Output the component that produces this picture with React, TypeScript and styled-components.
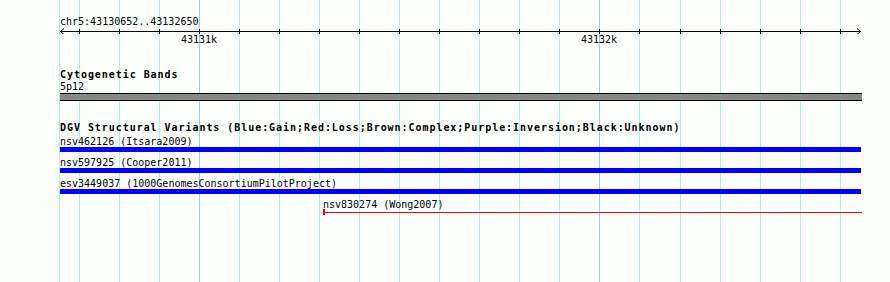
import React from "react";
import styled, { createGlobalStyle } from "styled-components";

const PAGE_W = 890;
const PAGE_H = 282;
const TRACK_LEFT = 60;
const TRACK_RIGHT = 861;
const TRACK_W = TRACK_RIGHT - TRACK_LEFT;

// guide-line x positions (every 100 bp); major ones carry a label
const GUIDES: { x: number; label?: string }[] = [
  { x: 79 }, { x: 119 }, { x: 159 }, { x: 199, label: "43131k" }, { x: 239 },
  { x: 279 }, { x: 319 }, { x: 359 }, { x: 399 }, { x: 439 }, { x: 479 },
  { x: 519 }, { x: 559 }, { x: 599, label: "43132k" }, { x: 639 }, { x: 680 },
  { x: 720 }, { x: 760 }, { x: 800 }, { x: 840 },
];

type Variant = { id: string; source: string; start: number; end: number; kind: "gain" | "loss" };

const VARIANTS: Variant[] = [
  { id: "nsv462126", source: "Itsara2009", start: TRACK_LEFT, end: TRACK_RIGHT, kind: "gain" },
  { id: "nsv597925", source: "Cooper2011", start: TRACK_LEFT, end: TRACK_RIGHT, kind: "gain" },
  { id: "esv3449037", source: "1000GenomesConsortiumPilotProject", start: TRACK_LEFT, end: TRACK_RIGHT, kind: "gain" },
  { id: "nsv830274", source: "Wong2007", start: 323, end: 862, kind: "loss" },
];

const GlobalStyle = createGlobalStyle`
  html, body {
    margin: 0;
    padding: 0;
    background: #fdfffd;
  }
  body {
    width: ${PAGE_W}px;
    height: ${PAGE_H}px;
    overflow: hidden;
    font-family: "DejaVu Sans Mono", "Liberation Mono", monospace;
    color: #000;
  }
`;

const Canvas = styled.div`
  position: relative;
  width: ${PAGE_W}px;
  height: ${PAGE_H}px;
  overflow: hidden;
  background: #fdfffd;
`;

const GuideLayer = styled.svg`
  position: absolute;
  left: 0;
  top: 0;
  z-index: 0;
`;

const Content = styled.div`
  position: relative;
  z-index: 1;
  display: flex;
  flex-direction: column;
  padding-top: 16px;
`;

const Ruler = styled.div`
  display: flex;
  flex-direction: column;
`;

const SmallText = styled.div`
  font-family: "DejaVu Sans Mono", "Liberation Mono", monospace;
  font-size: 10px;
  line-height: 12px;
  height: 12px;
  white-space: nowrap;
  color: #000;
`;

const RulerTitle = styled(SmallText)`
  padding-left: ${TRACK_LEFT}px;
`;

const AxisSvg = styled.svg`
  display: block;
`;

const TickLabels = styled.div`
  position: relative;
  height: 12px;
`;

const TickLabel = styled(SmallText)`
  position: absolute;
  top: 0;
  transform: translateX(-50%);
`;

const Track = styled.section<{ $gap: number }>`
  display: flex;
  flex-direction: column;
  margin-top: ${(p) => p.$gap}px;
`;

const TrackTitle = styled.div`
  font-family: "DejaVu Sans Mono", "Liberation Mono", monospace;
  font-size: 10px;
  font-weight: bold;
  letter-spacing: 0.95px;
  line-height: 12px;
  height: 12px;
  padding-left: ${TRACK_LEFT}px;
  white-space: nowrap;
`;

const BandLabel = styled(SmallText)`
  padding-left: ${TRACK_LEFT}px;
`;

const Band = styled.div`
  margin-left: ${TRACK_LEFT}px;
  width: ${TRACK_W + 1}px;
  height: 6px;
  background: #888888;
  border-top: 1px solid #000;
  border-bottom: 1px solid #000;
`;

const VariantList = styled.div`
  display: flex;
  flex-direction: column;
  margin-top: 2px;
`;

const VariantRow = styled.div`
  display: flex;
  flex-direction: column;
  margin-bottom: 5px;
`;

const VariantLabel = styled.div`
  font-family: "DejaVu Sans Mono", "Liberation Mono", monospace;
  font-size: 10px;
  line-height: 11px;
  height: 11px;
  white-space: nowrap;
`;

const GainBar = styled.div`
  height: 5px;
  background: #0000ff;
`;

const LossBar = styled.div`
  position: relative;
  height: 5px;

  &::before {
    content: "";
    position: absolute;
    left: 0;
    right: 0;
    top: 2px;
    height: 1px;
    background: #ff0000;
  }

  &::after {
    content: "";
    position: absolute;
    left: 0;
    top: -1px;
    width: 2px;
    height: 6px;
    background: #ff0000;
  }
`;

function Guides() {
  return (
    <GuideLayer width={PAGE_W} height={PAGE_H}>
      <rect x={59} y={0} width={1} height={PAGE_H} fill="#b2eeee" />
      {GUIDES.map((g) => (
        <rect
          key={g.x}
          x={g.x}
          y={0}
          width={1}
          height={PAGE_H}
          fill={g.label ? "#99ccee" : "#b2eeee"}
        />
      ))}
    </GuideLayer>
  );
}

function Axis() {
  return (
    <AxisSvg width={PAGE_W} height={6}>
      <line x1={TRACK_LEFT} y1={3.5} x2={TRACK_RIGHT} y2={3.5} stroke="#000" strokeWidth={1} />
      {GUIDES.map((g) => (
        <line key={g.x} x1={g.x + 0.5} y1={1} x2={g.x + 0.5} y2={6} stroke="#000" strokeWidth={1} />
      ))}
      <polyline
        points={`${TRACK_LEFT + 4},0.5 ${TRACK_LEFT + 0.5},3.5 ${TRACK_LEFT + 4},6.5`}
        fill="none"
        stroke="#000"
        strokeWidth={1}
      />
      <polyline
        points={`${TRACK_RIGHT - 4},0.5 ${TRACK_RIGHT - 0.5},3.5 ${TRACK_RIGHT - 4},6.5`}
        fill="none"
        stroke="#000"
        strokeWidth={1}
      />
    </AxisSvg>
  );
}

export default function App() {
  return (
    <>
      <GlobalStyle />
      <Canvas>
        <Guides />
        <Content>
          <Ruler>
            <RulerTitle>chr5:43130652..43132650</RulerTitle>
            <Axis />
            <TickLabels>
              {GUIDES.filter((g) => g.label).map((g) => (
                <TickLabel key={g.x} style={{ left: g.x }}>
                  {g.label}
                </TickLabel>
              ))}
            </TickLabels>
          </Ruler>

          <Track $gap={23}>
            <TrackTitle>Cytogenetic Bands</TrackTitle>
            <BandLabel>5p12</BandLabel>
            <Band />
          </Track>

          <Track $gap={21}>
            <TrackTitle>
              DGV Structural Variants (Blue:Gain;Red:Loss;Brown:Complex;Purple:Inversion;Black:Unknown)
            </TrackTitle>
            <VariantList>
              {VARIANTS.map((v) => (
                <VariantRow key={v.id} style={{ paddingLeft: v.start, width: v.end - v.start }}>
                  <VariantLabel>
                    {v.id} ({v.source})
                  </VariantLabel>
                  {v.kind === "gain" ? <GainBar /> : <LossBar />}
                </VariantRow>
              ))}
            </VariantList>
          </Track>
        </Content>
      </Canvas>
    </>
  );
}
